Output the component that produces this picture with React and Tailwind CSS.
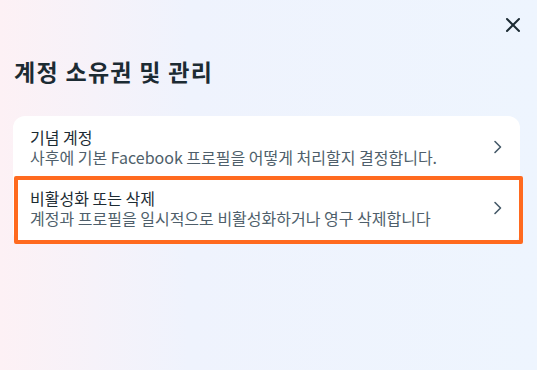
import React from "react";

const rows = [
    {
        title: "기념 계정",
        desc: "사후에 기본 Facebook 프로필을 어떻게 처리할지 결정합니다.",
    },
    {
        title: "비활성화 또는 삭제",
        desc: "계정과 프로필을 일시적으로 비활성화하거나 영구 삭제합니다",
    },
];

const Chevron = () => (
    <svg width="16" height="16" viewBox="0 0 16 16" fill="none" className="shrink-0">
        <path d="M5 2.5 L10.5 8 L5 13.5" stroke="#465a69" strokeWidth="1.6" strokeLinecap="round" strokeLinejoin="round" />
    </svg>
);

const App = () => {
    return (
        <div
            className="w-[537px] h-[370px] overflow-hidden bg-linear-to-r from-[#fdf1f5] via-[#eff3fd] via-35% to-[#eef5fe]"
            style={{ fontFamily: '"Noto Sans CJK KR", "Noto Sans", sans-serif' }}
        >
            <div className="flex justify-end pt-[16px] pr-[15px]">
                <button className="w-[18px] h-[18px] flex items-center justify-center">
                    <svg width="16" height="16" viewBox="0 0 16 16" fill="none">
                        <path d="M2 2 L14 14 M14 2 L2 14" stroke="#1c2b33" strokeWidth="2" strokeLinecap="round" />
                    </svg>
                </button>
            </div>

            <h1 className="mt-[22px] px-[14px] text-[23px] leading-[30px] font-bold tracking-[1.3px] text-[#1c2b33]">
                계정 소유권 및 관리
            </h1>

            <div className="relative mt-[30px] mx-[13px] w-[507px] bg-white rounded-[12px] pb-[6px]">
                {rows.map((row) => (
                    <div key={row.title} className="flex items-center justify-between pl-[17px] pr-[14px] pt-[11px] pb-[10px]">
                        <div>
                            <p className="text-[16px] leading-[20px] text-[#1c2b33]">{row.title}</p>
                            <p className="text-[16px] leading-[20px] text-[#4f5f6b]">{row.desc}</p>
                        </div>
                        <Chevron />
                    </div>
                ))}
                <div className="absolute top-[60px] left-[1px] right-[-3px] bottom-0 border-4 border-[#ff6a1f] rounded-[2px] pointer-events-none" />
            </div>
        </div>
    );
};

export default App;
